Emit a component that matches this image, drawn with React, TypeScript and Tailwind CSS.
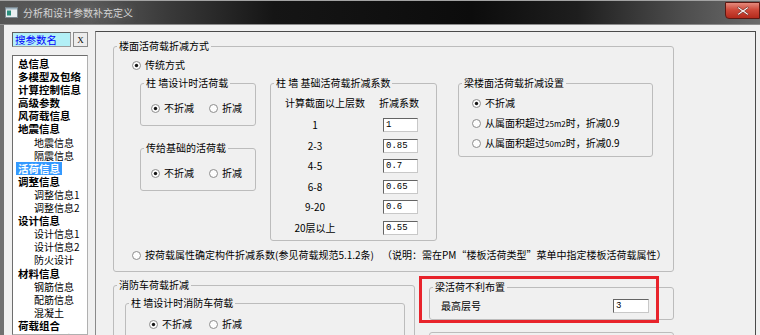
import React from 'react';

type Kids = { children?: React.ReactNode; className?: string };

function Group({ label, className, children }: Kids & { label?: string }) {
  return (
    <fieldset className={`shrink-0 border border-[#bcbcbc] rounded-[3px] ${className ?? ''}`}>
      {label && <legend className="ml-[3px] px-[2px] text-[10px] leading-[14px]">{label}</legend>}
      {children}
    </fieldset>
  );
}

function Radio({ label, checked, className }: { label: React.ReactNode; checked?: boolean; className?: string }) {
  return (
    <div className={`flex items-center gap-[4px] h-[14px] leading-[14px] whitespace-nowrap ${className ?? ''}`}>
      <svg width="9" height="9" viewBox="0 0 9 9" className="shrink-0">
        <circle cx="4.5" cy="4.5" r="4" fill="#fdfdfd" stroke="#8c8c8c" strokeWidth="1" />
        {checked && <circle cx="4.5" cy="4.5" r="1.7" fill="#151515" />}
      </svg>
      <span>{label}</span>
    </div>
  );
}

function Field({ value, className }: { value: string; className?: string }) {
  return (
    <div
      className={`w-[35px] h-[14px] shrink-0 bg-white border border-[#c8c8c8] border-t-[#646464] border-l-[#646464] pl-[2px] flex items-center font-['Liberation_Mono',monospace] text-[9px] leading-[12px] ${className ?? ''}`}
    >
      {value}
    </div>
  );
}

const tree: [string, number][] = [
  ['总信息', 0],
  ['多模型及包络', 0],
  ['计算控制信息', 0],
  ['高级参数', 0],
  ['风荷载信息', 0],
  ['地震信息', 0],
  ['地震信息', 1],
  ['隔震信息', 1],
  ['活荷信息', 2],
  ['调整信息', 0],
  ['调整信息1', 1],
  ['调整信息2', 1],
  ['设计信息', 0],
  ['设计信息1', 1],
  ['设计信息2', 1],
  ['防火设计', 1],
  ['材料信息', 0],
  ['钢筋信息', 1],
  ['配筋信息', 1],
  ['混凝土', 1],
  ['荷载组合', 0],
  ['组合信息', 1],
];

const factors: [string, string][] = [
  ['1', '1'],
  ['2-3', '0.85'],
  ['4-5', '0.7'],
  ['6-8', '0.65'],
  ['9-20', '0.6'],
  ['20层以上', '0.55'],
];

function TitleBar() {
  return (
    <div className="h-[25px] flex items-center border-t border-t-[#a3a3a3] border-b border-b-[#8d8d8d] bg-[linear-gradient(90deg,#555_0%,#5a5a5a_12%,#3a3a3a_22%,#151515_36%,#0c0c0c_62%,#1e1e1e_76%,#4e4e4e_90%,#6a6a6a_100%)]">
      <svg width="13" height="11" viewBox="0 0 13 11" className="ml-[5px] shrink-0">
        <rect x="0.5" y="0.5" width="12" height="10" fill="#e9eef1" stroke="#7b8890" />
        <rect x="1" y="1" width="11" height="1.5" fill="#9fb3c0" />
        <rect x="2" y="3.5" width="4" height="5" fill="#2a8f7d" />
      </svg>
      <span className="ml-[5px] text-[10px] leading-[14px] text-[#d4d4d4] [text-shadow:0_0_6px_#777]">分析和设计参数补充定义</span>
      <div className="ml-auto self-start mt-[1px] w-[35px] h-[17px] rounded-bl-[4px] border border-[#5e1812] bg-[linear-gradient(180deg,#e48a7c_0%,#cf4a3a_45%,#b42a1c_100%)] flex items-center justify-center">
        <svg width="12" height="10" viewBox="0 0 12 10">
          <path
            d="M1.5 0.8 L6 4 L10.5 0.8 L11.6 2 L7.6 5 L11.6 8 L10.5 9.2 L6 6 L1.5 9.2 L0.4 8 L4.4 5 L0.4 2 Z"
            fill="#fff"
            stroke="#6b2a22"
            strokeWidth="0.7"
          />
        </svg>
      </div>
    </div>
  );
}

function LeftPane() {
  return (
    <div className="ml-[8px] mt-[7px] w-[76px] h-[303px] flex flex-col shrink-0">
      <div className="flex gap-[2px] h-[15px]">
        <div className="w-[59px] bg-[#b2eff6] border border-[#9a9a9a] border-t-[#5e5e5e] border-l-[#5e5e5e] pl-[2px] text-[10.5px] leading-[13px] text-[#0000ff]">
          搜参数名
        </div>
        <div className="w-[15px] border border-[#8a8a8a] bg-[#ececec] flex items-center justify-center font-['Liberation_Serif',serif] text-[9px]">
          X
        </div>
      </div>
      <div className="mt-[8px] flex-1 overflow-hidden bg-white border border-[#b0b0b0] border-t-[#6d6d6d] border-l-[#6d6d6d] pt-[1px] pl-[3px]">
        {tree.map(([name, kind], i) => (
          <div key={i} className="h-[13.1px] leading-[13.1px] whitespace-nowrap">
            {kind === 0 && <span className="px-[2px] font-bold text-[10.5px]">{name}</span>}
            {kind === 1 && <span className="ml-[18px] text-[10px]">{name}</span>}
            {kind === 2 && (
              <span className="inline-block px-[2px] bg-[#3399ff] text-white font-bold text-[10.5px]">{name}</span>
            )}
          </div>
        ))}
      </div>
    </div>
  );
}

function MainPanel() {
  return (
    <div className="ml-[7px] mt-[6px] w-[661px] h-[320px] shrink-0 border border-[#4a4a4a] border-l-[#8a8a8a] flex flex-col">
      <Group label="楼面活荷载折减方式" className="ml-[17px] mt-[7px] w-[561px] h-[233px]">
        <Radio checked label="传统方式" className="mt-[5px] ml-[18px]" />
        <div className="mt-[4px] ml-[26px] flex items-start">
          <div className="w-[116px] flex flex-col shrink-0">
            <Group label="柱 墙设计时活荷载" className="h-[50px]">
              <div className="mt-[11px] ml-[10px] flex items-center">
                <Radio checked label="不折减" />
                <Radio label="折减" className="ml-[15px]" />
              </div>
            </Group>
            <Group label="传给基础的活荷载" className="mt-[15px] h-[50px]">
              <div className="mt-[11px] ml-[10px] flex items-center">
                <Radio checked label="不折减" />
                <Radio label="折减" className="ml-[15px]" />
              </div>
            </Group>
          </div>
          <Group label="柱 墙 基础活荷载折减系数" className="ml-[14px] w-[167px] h-[165px]">
            <div className="mt-[6px] ml-[14px] flex leading-[14px]">
              <span>计算截面以上层数</span>
              <span className="ml-[14px]">折减系数</span>
            </div>
            <div className="mt-[8px] flex flex-col gap-[6.6px]">
              {factors.map(([floors, value]) => (
                <div key={floors} className="h-[14px] flex items-center">
                  <span className="ml-[14px] w-[60px] text-center">{floors}</span>
                  <Field value={value} className="ml-[38px]" />
                </div>
              ))}
            </div>
          </Group>
          <Group label="梁楼面活荷载折减设置" className="ml-[21px] w-[195px] h-[81px]">
            <div className="mt-[6px] ml-[13px] flex flex-col gap-[6px]">
              <Radio checked label="不折减" />
              <Radio
                label={
                  <>
                    从属面积超过<span className="text-[8px]">25m2</span>时，折减0.9
                  </>
                }
              />
              <Radio
                label={
                  <>
                    从属面积超过<span className="text-[8px]">50m2</span>时，折减0.9
                  </>
                }
              />
            </div>
          </Group>
        </div>
        <Radio
          className="mt-[7px] ml-[18px]"
          label={
            <>
              按荷载属性确定构件折减系数(参见荷载规范5.1.2条)
              <span className="ml-[8px]">（说明：需在PM“楼板活荷类型”菜单中指定楼板活荷载属性）</span>
            </>
          }
        />
      </Group>

      <div className="mt-[6px] ml-[17px] flex items-start">
        <Group label="消防车荷载折减" className="w-[302px] h-[80px]">
          <Group label="柱 墙设计时消防车荷载" className="mt-[4px] ml-[11px] w-[280px] h-[50px]">
            <div className="mt-[7px] ml-[23px] flex items-center">
              <Radio checked label="不折减" />
              <Radio label="折减" className="ml-[17px]" />
            </div>
          </Group>
        </Group>
        <div className="ml-[14px] mt-[2px] flex flex-col">
          <Group label="梁活荷不利布置" className="w-[245px] h-[40px]">
            <div className="mt-[5px] pl-[11px] pr-[24px] flex items-center justify-between">
              <span className="leading-[14px]">最高层号</span>
              <Field value="3" className="w-[36px]" />
            </div>
          </Group>
          <Group className="mt-[12px] w-[245px] h-[30px]" />
        </div>
      </div>
    </div>
  );
}

export default function App() {
  return (
    <div className="relative w-[760px] h-[335px] overflow-hidden bg-[#f0f0f0] text-black text-[10px] leading-[14px] font-['Noto_Sans_CJK_SC','Noto_Sans',sans-serif]">
      <TitleBar />
      <div className="flex items-start">
        <div className="w-[4px] h-[310px] shrink-0 bg-[#707070]" />
        <LeftPane />
        <MainPanel />
      </div>
      {/* red annotation box */}
      <div className="absolute left-[419px] top-[276px] w-[240px] h-[47px] border-[3px] border-[#e8232b]" />
    </div>
  );
}
